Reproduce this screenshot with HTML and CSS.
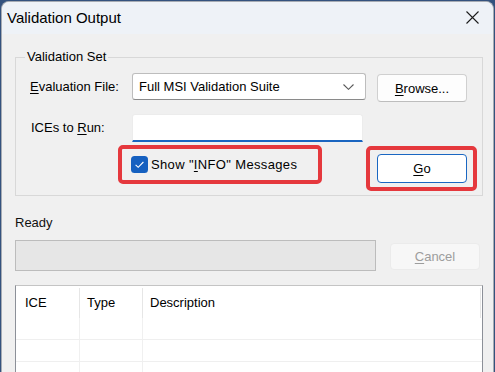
FILE: index.html
```html
<!DOCTYPE html>
<html>
<head>
<meta charset="utf-8">
<link rel="stylesheet" href="styles.css">
</head>
<body>
<div class="window">
  <div class="titlebar">
    <span class="title">Validation Output</span>
    <svg class="close" width="13" height="13" viewBox="0 0 13 13"><path d="M0.5 0.5 L12.5 12.5 M12.5 0.5 L0.5 12.5" stroke="#1c1c1c" stroke-width="1.1" fill="none"/></svg>
  </div>
  <div class="content">
    <fieldset class="group">
      <legend class="legend">Validation Set</legend>
      <div class="row row-eval">
        <span class="lbl"><u>E</u>valuation File:</span>
        <div class="combo">
          <span class="combo-text">Full MSI Validation Suite</span>
          <svg class="chev" width="11" height="6" viewBox="0 0 11 6"><path d="M0.5 0.5 L5.5 5.3 L10.5 0.5" stroke="#5a5a5a" stroke-width="1.1" fill="none"/></svg>
        </div>
        <div class="btn browse"><u>B</u>rowse...</div>
      </div>
      <div class="row row-ices">
        <span class="lbl">ICEs to <u>R</u>un:</span>
        <div class="field"></div>
      </div>
      <div class="row row-go">
        <div class="hl hl-check">
          <svg class="check" width="17" height="17" viewBox="0 0 17 17"><rect x="0" y="0" width="17" height="17" rx="3.5" fill="#1560c0"/><path d="M4.6 8.8 L7.2 11.3 L12.4 6" stroke="#ffffff" stroke-width="1.1" fill="none"/></svg>
          <span class="check-text">Show "<u>I</u>NFO" Messages</span>
        </div>
        <div class="hl hl-go">
          <div class="btn go"><u>G</u>o</div>
        </div>
      </div>
    </fieldset>
    <div class="status">Ready</div>
    <div class="progress-row">
      <div class="progress"></div>
      <div class="btn cancel"><u>C</u>ancel</div>
    </div>
    <div class="list">
      <div class="list-head">
        <div class="col c1">ICE</div>
        <div class="col c2">Type</div>
        <div class="col c3">Description</div>
      </div>
      <div class="list-row"><div class="cell c1"></div><div class="cell c2"></div><div class="cell c3"></div></div>
      <div class="list-row"><div class="cell c1"></div><div class="cell c2"></div><div class="cell c3"></div></div>
      <div class="list-row"><div class="cell c1"></div><div class="cell c2"></div><div class="cell c3"></div></div>
    </div>
  </div>
</div>
</body>
</html>
```
FILE: styles.css
```css
html, body {
  margin: 0;
  padding: 0;
  width: 495px;
  height: 372px;
  overflow: hidden;
  background: #34527e;
  font-family: "Liberation Sans", Arial, sans-serif;
  font-size: 13px;
  color: #000;
}
u { text-decoration: underline; text-underline-offset: 2px; }

.window {
  margin: 1px 0 0 1px;
  width: 491px;
  height: 400px;
  border: 1px solid #a6abb3;
  border-bottom: none;
  border-radius: 8px 8px 0 0;
  background: #f0f0f0;
  overflow: hidden;
}
.titlebar {
  height: 32px;
  background: #eef2f7;
  display: flex;
  align-items: center;
  justify-content: space-between;
  padding: 0 14px 0 5px;
}
.title {
  font-size: 15px;
  color: #000;
  margin-top: -1px;
}
.close { margin-top: -2px; }

.content {
  padding: 0 10px 0 13px;
}
.group {
  margin: 16px 0 0 0;
  width: 468px;
  box-sizing: border-box;
  border: 1px solid #d8d8d8;
  padding: 9px 0 4px 0;
  min-width: 0;
}
.legend {
  margin-left: 9px;
  padding: 0 2px;
  line-height: 14px;
  font-size: 13px;
}
.row {
  display: flex;
  align-items: flex-start;
  padding-left: 14px;
}
.lbl {
  width: 102px;
  line-height: 28px;
  flex: none;
}
.row-ices .lbl { padding-left: 1px; width: 101px; }
.combo {
  width: 234px;
  height: 27px;
  box-sizing: border-box;
  background: #fff;
  border: 1px solid #bdbdbd;
  border-bottom-color: #8a8a8a;
  border-radius: 3px;
  display: flex;
  align-items: center;
  justify-content: space-between;
  padding: 0 11px 0 6px;
}
.chev { margin-top: 1px; }
.btn {
  box-sizing: border-box;
  display: flex;
  align-items: center;
  justify-content: center;
  background: #fdfdfd;
  border: 1px solid #d0d0d0;
  border-bottom-color: #bdbdbd;
  border-radius: 4px;
}
.browse {
  width: 90px;
  height: 28px;
  margin: 1px 0 0 11px;
}
.row-ices { margin-top: 12px; }
.field {
  width: 231px;
  height: 28px;
  box-sizing: border-box;
  background: #fff;
  border: 1px solid #ececec;
  border-bottom: 2px solid #1a65c0;
  border-radius: 3px 3px 0 0;
}
.row-go { margin-top: 3px; }
.hl {
  box-sizing: border-box;
  border: 4px solid #e5383d;
  border-radius: 5px;
}
.hl-check {
  width: 204px;
  height: 39px;
  margin-left: 88px;
  display: flex;
  align-items: center;
  padding-left: 9px;
}
.check { flex: none; }
.check-text { margin-left: 3px; letter-spacing: 0.35px; }
.hl-go {
  width: 111px;
  height: 45px;
  margin: 1px 0 0 44px;
  padding: 4px 0 0 7px;
}
.go {
  width: 90px;
  height: 29px;
  background: #fff;
  border: 1px solid #1a67c2;
  border-radius: 4px;
}
.status {
  margin-top: 19px;
  line-height: 16px;
  color: #111;
}
.progress-row {
  display: flex;
  align-items: flex-start;
  margin-top: 9px;
}
.progress {
  width: 361px;
  height: 31px;
  box-sizing: border-box;
  background: #e6e6e6;
  border: 1px solid #bcbcbc;
}
.cancel {
  width: 90px;
  height: 27px;
  margin: 3px 0 0 14px;
  background: #f7f7f7;
  border: 1px solid #ebebeb;
  color: #9d9d9d;
}
.list {
  margin-top: 14px;
  width: 468px;
  height: 120px;
  box-sizing: border-box;
  background: #fff;
  border: 1px solid #8c9098;
  border-top-color: #c4c4c4;
}
.list-head {
  display: flex;
  height: 32px;
}
.col {
  box-sizing: border-box;
  line-height: 32px;
  padding-left: 9px;
}
.list-head .c1, .list-head .c2 {
  border-right: 1px solid #e6e6e6;
  height: 30px;
  margin-top: 2px;
  line-height: 30px;
}
.c1 { width: 64px; }
.c2 { width: 63px; padding-left: 7px; }
.c3 { flex: 1; padding-left: 7px; border-right: 1px solid #e6e6e6; margin-right: 1px; }
.list-head .c3 { height: 30px; margin-top: 2px; line-height: 30px; }
.list-row {
  display: flex;
  height: 22px;
  box-sizing: border-box;
  border-bottom: 1px solid #efefef;
}
.cell { height: 100%; box-sizing: border-box; }
.list-row .c1, .list-row .c2 { border-right: 1px solid #f0f0f0; }
.list-row .c3 { border-right: none; }
```
